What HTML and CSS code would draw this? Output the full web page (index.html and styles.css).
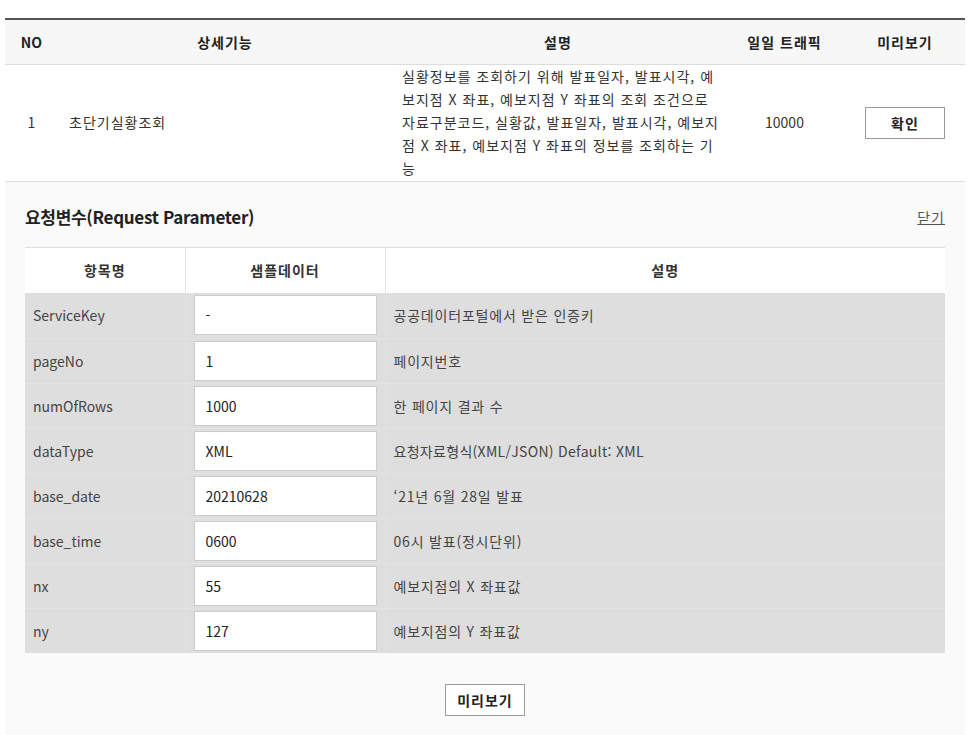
FILE: index.html
```html
<!DOCTYPE html>
<html lang="ko">
<head>
<meta charset="utf-8">
<title>초단기실황조회</title>
<link rel="stylesheet" href="styles.css">
</head>
<body>
<div class="wrap">
  <table class="api-table">
    <colgroup>
      <col class="c-no"><col class="c-name"><col class="c-desc"><col class="c-traffic"><col class="c-preview">
    </colgroup>
    <thead>
      <tr><th>NO</th><th class="ko">상세기능</th><th class="ko">설명</th><th class="ko">일일 트래픽</th><th class="ko">미리보기</th></tr>
    </thead>
    <tbody>
      <tr>
        <td class="center">1</td>
        <td class="name ko">초단기실황조회</td>
        <td class="desc ko">실황정보를 조회하기 위해 발표일자, 발표시각, 예보지점 X 좌표, 예보지점 Y 좌표의 조회 조건으로 자료구분코드, 실황값, 발표일자, 발표시각, 예보지점 X 좌표, 예보지점 Y 좌표의 정보를 조회하는 기능</td>
        <td class="center">10000</td>
        <td class="center"><button class="btn ko" type="button">확인</button></td>
      </tr>
    </tbody>
  </table>

  <section class="panel">
    <div class="panel-head">
      <h3 class="panel-title">요청변수(Request Parameter)</h3>
      <a class="close ko" href="#">닫기</a>
    </div>
    <table class="param-table">
      <colgroup><col class="p-name"><col class="p-sample"><col class="p-desc"></colgroup>
      <thead>
        <tr><th class="ko">항목명</th><th class="ko">샘플데이터</th><th class="ko">설명</th></tr>
      </thead>
      <tbody>
        <tr><td>ServiceKey</td><td><input class="field" type="text" value="-"></td><td class="pdesc">공공데이터포털에서 받은 인증키</td></tr>
        <tr><td>pageNo</td><td><input class="field" type="text" value="1"></td><td class="pdesc">페이지번호</td></tr>
        <tr><td>numOfRows</td><td><input class="field" type="text" value="1000"></td><td class="pdesc">한 페이지 결과 수</td></tr>
        <tr><td>dataType</td><td><input class="field" type="text" value="XML"></td><td class="pdesc mixed">요청자료형식(XML/JSON) Default: XML</td></tr>
        <tr><td>base_date</td><td><input class="field" type="text" value="20210628"></td><td class="pdesc">‘21년 6월 28일 발표</td></tr>
        <tr><td>base_time</td><td><input class="field" type="text" value="0600"></td><td class="pdesc">06시 발표(정시단위)</td></tr>
        <tr><td>nx</td><td><input class="field" type="text" value="55"></td><td class="pdesc">예보지점의 X 좌표값</td></tr>
        <tr><td>ny</td><td><input class="field" type="text" value="127"></td><td class="pdesc">예보지점의 Y 좌표값</td></tr>
      </tbody>
    </table>
    <div class="actions">
      <button class="btn ko" type="button">미리보기</button>
    </div>
  </section>
</div>
</body>
</html>
```

FILE: styles.css
```css
* { box-sizing: border-box; }
html, body { margin: 0; padding: 0; background: #fff; }
body {
  font-family: "Noto Sans CJK KR", "Noto Sans", sans-serif;
  font-size: 14px;
  color: #333;
}
.ko { letter-spacing: 1px; }
.wrap {
  width: 960px;
  margin: 18px 0 0 5px;
}
.api-table {
  width: 960px;
  border-collapse: collapse;
  table-layout: fixed;
  border-top: 2px solid #555;
}
.c-no { width: 53px; }
.c-name { width: 334px; }
.c-desc { width: 332px; }
.c-traffic { width: 121px; }
.c-preview { width: 120px; }
.api-table th {
  height: 45px;
  background: #f7f7f7;
  font-weight: bold;
  color: #222;
  text-align: center;
  border-bottom: 1px solid #ddd;
  padding: 0;
}
.api-table td {
  height: 117px;
  border-bottom: 1px solid #ddd;
  vertical-align: middle;
  padding: 0 10px;
  line-height: 23px;
  color: #333;
}
.api-table td.center { text-align: center; padding: 0; }
.api-table td.name { padding-left: 11px; }
.api-table td.desc { padding: 0 3px 0 10px; }
.btn {
  font-family: inherit;
  font-size: 14px;
  font-weight: bold;
  color: #222;
  background: #fff;
  border: 1px solid #999;
  width: 80px;
  height: 32px;
  padding: 0;
  cursor: pointer;
}
.panel {
  background: #fafafa;
  padding: 20px 20px 19px;
}
.panel-head {
  display: flex;
  justify-content: space-between;
  align-items: center;
  height: 30px;
  margin-bottom: 15px;
}
.panel-title {
  margin: 0;
  font-size: 17px;
  font-weight: bold;
  color: #222;
  letter-spacing: -0.3px;
}
.close {
  color: #555;
  text-decoration: underline;
  font-size: 14px;
  margin-right: 0;
}
.param-table {
  width: 920px;
  border-collapse: collapse;
  table-layout: fixed;
  border-top: 1px solid #ddd;
}
.p-name { width: 160px; }
.p-sample { width: 200px; }
.p-desc { width: 560px; }
.param-table th {
  height: 46px;
  background: #fff;
  font-weight: bold;
  color: #333;
  text-align: center;
  border-left: 1px solid #e2e2e2;
  padding: 0;
}
.param-table th:first-child { border-left: none; }
.param-table td {
  height: 45px;
  background: #dedede;
  color: #444;
  padding: 0 8px;
  vertical-align: middle;
  border-left: 1px solid #e3e3e3;
  border-top: 1px solid #e3e3e3;
}
.param-table td.pdesc { letter-spacing: 0.8px; }
.param-table td.pdesc.mixed { letter-spacing: 0.3px; }
.param-table td:first-child { border-left: none; }
.param-table tbody tr:first-child td { border-top: none; }
.field {
  display: block;
  width: 183px;
  height: 40px;
  border: 1px solid #ccc;
  background: #fff;
  padding: 0 11px;
  font-family: inherit;
  font-size: 14px;
  color: #222;
  outline: none;
}
.actions {
  display: flex;
  justify-content: center;
  padding-top: 31px;
  height: 82px;
}
```
